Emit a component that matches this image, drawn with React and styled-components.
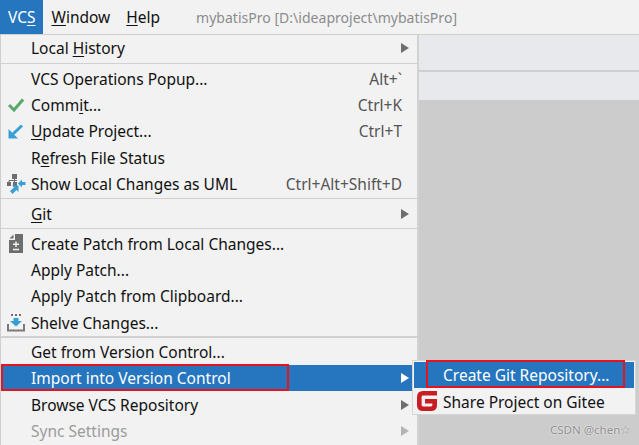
import styled, { createGlobalStyle } from "styled-components";

const GlobalStyle = createGlobalStyle`
  html, body {
    margin: 0;
    padding: 0;
    width: 639px;
    height: 445px;
    overflow: hidden;
    background: #f2f2f2;
    font-family: "Noto Sans", "Open Sans", sans-serif;
  }
`;

function CheckIcon() {
  return (
    <svg width="16" height="14" viewBox="0 0 16 14">
      <path d="M1 7 L6 12 L15 1.5" fill="none" stroke="#59a869" strokeWidth="3" />
    </svg>
  );
}

function UpdateIcon() {
  return (
    <svg width="15" height="15" viewBox="0 0 15 15">
      <path d="M14 1.5 L5 10" fill="none" stroke="#389fd6" strokeWidth="3" />
      <path d="M0.5 5 L0.5 14.5 L10 14.5 Z" fill="#389fd6" />
    </svg>
  );
}

function UmlIcon() {
  return (
    <svg width="20" height="20" viewBox="0 0 20 20">
      <rect x="6" y="0" width="5" height="5" fill="#6e6e6e" />
      <rect x="1" y="8" width="4" height="4" fill="#6e6e6e" />
      <rect x="7" y="8" width="4" height="4" fill="#6e6e6e" />
      <path d="M8.5 5 V8 M3 8 V6.5 H11" fill="none" stroke="#6e6e6e" strokeWidth="1" />
      <path d="M19.5 8 V11 H16 V13.5 L12 9.5 L16 5.5 V8 Z" fill="#389fd6" />
      <path d="M4 17 L8 13.5 L6 11.5 H12.5 V18 L10.5 16 L6.5 20 Z" fill="#389fd6" />
    </svg>
  );
}

function PatchIcon() {
  return (
    <svg width="14" height="19" viewBox="0 0 14 19">
      <path d="M6 0 H14 V19 H0 V6 H6 Z" fill="#6e6e6e" />
      <path d="M4.5 0.5 V4.5 H0.5 Z" fill="#6e6e6e" />
      <path d="M7 7.5 V13 M4 10.2 H10 M4 15.5 H10" fill="none" stroke="#f2f2f2" strokeWidth="1.4" />
    </svg>
  );
}

function ShelveIcon() {
  return (
    <svg width="18" height="18" viewBox="0 0 18 18">
      <path d="M4 1 H6 M8 1 H10 M12 1 H14" fill="none" stroke="#6e6e6e" strokeWidth="2" />
      <path d="M6.5 4 H11.5 V7 H15 L9 12.5 L3 7 H6.5 Z" fill="#389fd6" />
      <path d="M1 10 V16.5 H17 V10" fill="none" stroke="#7a7a7a" strokeWidth="2" />
    </svg>
  );
}

function GiteeIcon() {
  return (
    <svg width="20" height="20" viewBox="0 0 20 20">
      <path
        d="M20 2.3 H6 Q2.3 2.3 2.3 6 V14 Q2.3 17.7 6 17.7 H14 Q17.7 17.7 17.7 14 V10.3 H8"
        fill="none"
        stroke="#c71d23"
        strokeWidth="4.6"
      />
    </svg>
  );
}

function ArrowRight({ $muted, $white }) {
  return (
    <Arrow viewBox="0 0 8 10" width="8" height="10">
      <path d="M0 0 L8 5 L0 10 Z" fill={$white ? "#ffffff" : $muted ? "#b5b5b5" : "#6e6e6e"} />
    </Arrow>
  );
}

function Item({ icon, label, shortcut, submenu, active, disabled, marked }) {
  return (
    <Row $active={active} $disabled={disabled}>
      {icon && <IconSlot>{icon}</IconSlot>}
      <Label>{label}</Label>
      {shortcut && <Shortcut>{shortcut}</Shortcut>}
      {submenu && <ArrowRight $white={active} $muted={disabled} />}
      {marked && <RedBox />}
    </Row>
  );
}

export default function App() {
  return (
    <Page>
      <GlobalStyle />
      <MenuBar>
        <TopMenu $active>
          VC<Mn>S</Mn>
        </TopMenu>
        <TopMenu>
          <Mn>W</Mn>indow
        </TopMenu>
        <TopMenu>
          <Mn>H</Mn>elp
        </TopMenu>
        <Title>mybatisPro [D:\ideaproject\mybatisPro]</Title>
      </MenuBar>

      <Body>
        <Menu>
          <Group>
            <Item label={<>Local <Mn>H</Mn>istory</>} submenu />
          </Group>
          <Group>
            <Item label="VCS Operations Popup..." shortcut="Alt+`" />
            <Item icon={<CheckIcon />} label={<>Comm<Mn>i</Mn>t...</>} shortcut="Ctrl+K" />
            <Item icon={<UpdateIcon />} label={<><Mn>U</Mn>pdate Project...</>} shortcut="Ctrl+T" />
            <Item label={<>R<Mn>e</Mn>fresh File Status</>} />
            <Item icon={<UmlIcon />} label="Show Local Changes as UML" shortcut="Ctrl+Alt+Shift+D" />
          </Group>
          <Group>
            <Item label={<><Mn>G</Mn>it</>} submenu />
          </Group>
          <Group>
            <Item icon={<PatchIcon />} label="Create Patch from Local Changes..." />
            <Item label="Apply Patch..." />
            <Item label="Apply Patch from Clipboard..." />
            <Item icon={<ShelveIcon />} label="Shelve Changes..." />
          </Group>
          <Group $thick>
            <Item label="Get from Version Control..." />
            <Item label="Import into Version Control" submenu active marked />
            <Item label="Browse VCS Repository" submenu />
            <Item label="Sync Settings" submenu disabled />
          </Group>
        </Menu>

        <Backdrop>
          <ToolStrip />
          <ToolStrip $second />
          <EditorArea />
        </Backdrop>

        <SubMenu>
          <SubRow $active>
            Create Git Repository...
            <SubRedBox />
          </SubRow>
          <SubRow $lower>
            <GiteeSlot>
              <GiteeIcon />
            </GiteeSlot>
            Share Project on Gitee
          </SubRow>
        </SubMenu>

        <Watermark>CSDN @chen☆</Watermark>
      </Body>
    </Page>
  );
}

const Page = styled.div`
  width: 639px;
  height: 445px;
  display: flex;
  flex-direction: column;
  overflow: hidden;
  background: #f2f2f2;
  color: #111;
  font-size: 15.5px;
`;

const MenuBar = styled.div`
  height: 34px;
  flex: none;
  display: flex;
  align-items: stretch;
  background: #f2f2f2;
  border-bottom: 1px solid #cfcfcf;
`;

const TopMenu = styled.div`
  display: flex;
  align-items: center;
  padding: 0 8px;
  background: ${(p) => (p.$active ? "#2675bf" : "transparent")};
  color: ${(p) => (p.$active ? "#ffffff" : "#111")};
`;

const Mn = styled.span`
  text-decoration: underline;
  text-underline-offset: 2px;
`;

const Title = styled.div`
  display: flex;
  align-items: center;
  margin-left: 28px;
  color: #8c8c8c;
  font-size: 14.05px;
`;

const Body = styled.div`
  flex: 1;
  position: relative;
  display: flex;
  min-height: 0;
`;

const Menu = styled.div`
  width: 419px;
  flex: none;
  border-left: 1px solid #cfcfcf;
  border-right: 2px solid #d2d2d2;
  box-sizing: border-box;
  background: #f2f2f2;
`;

const Group = styled.div`
  border-top: 1px solid #d0d0d0;
  padding: 1.4px 0;
  &:first-child {
    border-top: none;
    padding-top: 0;
  }
  &:nth-child(2) {
    padding-top: 2px;
  }
  ${(p) =>
    p.$thick &&
    `
    border-top-width: 2.5px;
    margin-top: -1.4px;
    padding-top: 1.2px;
  `}
`;

const Row = styled.div`
  position: relative;
  height: 26.25px;
  padding: 0 8px 0 30px;
  display: flex;
  align-items: center;
  background: ${(p) => (p.$active ? "#2675bf" : "transparent")};
  color: ${(p) => (p.$active ? "#ffffff" : p.$disabled ? "#9c9c9c" : "#111")};
`;

const IconSlot = styled.span`
  position: absolute;
  left: 4px;
  top: 0;
  width: 21px;
  height: 100%;
  display: flex;
  align-items: center;
  justify-content: center;
`;

const Label = styled.span`
  flex: 1;
  white-space: nowrap;
`;

const Shortcut = styled.span`
  color: #555;
  margin-right: 7px;
`;

const Arrow = styled.svg`
  flex: none;
`;

const RedBox = styled.span`
  position: absolute;
  left: 0;
  top: -1px;
  width: 288px;
  height: calc(100% + 1px);
  box-sizing: border-box;
  border: 2px solid #e5141f;
`;

const Backdrop = styled.div`
  flex: 1;
  display: flex;
  flex-direction: column;
  background: #cccccc;
`;

const ToolStrip = styled.div`
  height: ${(p) => (p.$second ? "28px" : "35px")};
  background: #e8e9ec;
  border-bottom: ${(p) => (p.$second ? "none" : "2px solid #cfcfcf")};
`;

const EditorArea = styled.div`
  flex: 1;
  background: #cccccc;
`;

const SubMenu = styled.div`
  position: absolute;
  left: 412px;
  top: 325px;
  width: 224px;
  box-sizing: border-box;
  padding: 1px 1px 0;
  background: #f2f2f2;
  border: 1px solid #d6d6d6;
`;

const SubRow = styled.div`
  position: relative;
  box-sizing: border-box;
  height: 26px;
  padding: ${(p) => (p.$lower ? "2px" : "0")} 0 0 29px;
  display: flex;
  align-items: center;
  white-space: nowrap;
  background: ${(p) => (p.$active ? "#2675bf" : "transparent")};
  color: ${(p) => (p.$active ? "#ffffff" : "#111")};
`;

const SubRedBox = styled.span`
  position: absolute;
  left: 12px;
  top: -2px;
  width: 199px;
  height: 28px;
  box-sizing: border-box;
  border: 2px solid #e5141f;
`;

const GiteeSlot = styled.span`
  position: absolute;
  left: 3px;
  top: 3px;
  width: 20px;
  height: 20px;
`;

const Watermark = styled.div`
  position: absolute;
  left: 550px;
  top: 387px;
  font-size: 11.5px;
  color: #8f8f8f;
  text-shadow: 0 0 2px #ffffff;
`;
